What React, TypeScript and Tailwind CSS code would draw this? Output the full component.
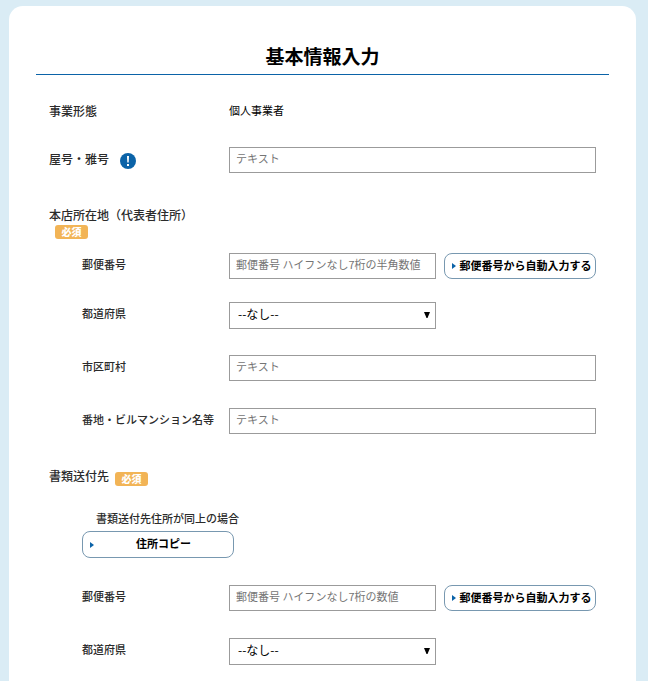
import { ReactElement, ReactNode } from "react";

function Badge() {
    return (
        <span className="inline-block w-[33px] h-[14px] rounded-[3px] bg-[#f2b456] text-center text-[10px] leading-[14px] font-black text-white">
            必須
        </span>
    );
}

function Row({ label, htmlFor, children, className = "" }: {
    label: string;
    htmlFor: string;
    children: ReactNode;
    className?: string;
}): ReactElement {
    return (
        <div className={`flex h-[27px] items-start ${className}`}>
            <label htmlFor={htmlFor} className="w-[180px] shrink-0 pl-[33px] text-[11px] leading-[22px] font-medium whitespace-nowrap">
                {label}
            </label>
            <div className="flex-1 min-w-0">{children}</div>
        </div>
    );
}

function TextBox({ id, placeholder }: { id: string; placeholder: string }) {
    return (
        <input
            id={id}
            type="text"
            placeholder={placeholder}
            className="block w-full min-w-0 h-[26px] border border-[#9b9b9b] bg-white px-[6px] pb-1 text-[11px] text-black placeholder:text-[#757575]"
        />
    );
}

function ActionButton({ children, className = "" }: { children: ReactNode; className?: string }) {
    return (
        <button
            type="button"
            className={`flex w-[152px] items-center rounded-lg border border-[#7898b0] bg-white pl-[7px] text-[11px] font-bold text-black ${className}`}
        >
            <svg width="4" height="6" viewBox="0 0 4 6" className="shrink-0" aria-hidden="true">
                <path d="M0 0L4 3L0 6Z" fill="#0b63a8" />
            </svg>
            <span className="flex-1 pb-[2px] text-center whitespace-nowrap">{children}</span>
        </button>
    );
}

function PostalRow({ id, placeholder, className }: { id: string; placeholder: string; className?: string }) {
    return (
        <Row label="郵便番号" htmlFor={id} className={className}>
            <div className="grid grid-cols-[1fr_152px] gap-2">
                <TextBox id={id} placeholder={placeholder} />
                <ActionButton>郵便番号から自動入力する</ActionButton>
            </div>
        </Row>
    );
}

function PrefectureRow({ id }: { id: string }) {
    return (
        <Row label="都道府県" htmlFor={id}>
            <div className="grid grid-cols-[1fr_152px] gap-2">
                <div className="relative">
                    <select
                        id={id}
                        className="block w-full h-[27px] appearance-none border border-[#9b9b9b] bg-white px-2 pb-1 text-[12px] text-black"
                    >
                        <option>--なし--</option>
                    </select>
                    <svg
                        width="6"
                        height="6"
                        viewBox="0 0 6 6"
                        className="pointer-events-none absolute right-[6px] top-[10px]"
                        aria-hidden="true"
                    >
                        <path d="M0 0H6L3.5 6H2.5Z" fill="#000" />
                    </svg>
                </div>
            </div>
        </Row>
    );
}

export default function App() {
    return (
        <div className="flex min-h-screen flex-col bg-[#daecf5] pt-[6px] pl-[9px] pr-3 font-['Noto_Sans_CJK_JP',sans-serif] text-[#2b2b2b]">
            <main className="flex-1 rounded-t-[14px] bg-white px-[27px] pt-9">
                <h1 className="border-b border-[#0b63a8] pb-1 text-center text-[19px] leading-7 font-bold text-black">
                    基本情報入力
                </h1>

                <form className="pt-6 px-[13px]">
                    <div className="flex">
                        <div className="w-[180px] text-[12px] leading-6 font-medium">事業形態</div>
                        <div className="text-[11px] leading-[22px] text-black">個人事業者</div>
                    </div>

                    <div className="mt-6 flex h-[27px]">
                        <div className="flex w-[180px] shrink-0 items-start">
                            <label htmlFor="trade-name" className="text-[12px] leading-6 font-medium">
                                屋号・雅号
                            </label>
                            <button type="button" aria-label="屋号・雅号について" className="mt-[6px] ml-[11px]">
                                <svg width="16" height="16" viewBox="0 0 16 16" className="block" aria-hidden="true">
                                    <circle cx="8" cy="8" r="8" fill="#0b63a8" />
                                    <path d="M7 3H9L8.7 9.5H7.3Z" fill="#fff" />
                                    <rect x="7" y="11" width="2" height="2" fill="#fff" />
                                </svg>
                            </button>
                        </div>
                        <div className="flex-1 min-w-0">
                            <TextBox id="trade-name" placeholder="テキスト" />
                        </div>
                    </div>

                    <section className="mt-[31px]">
                        <h2 className="text-[12px] leading-5 font-medium">本店所在地（代表者住所）</h2>
                        <div className="flex pl-[6px]">
                            <Badge />
                        </div>
                        <PostalRow
                            id="office-postal"
                            placeholder="郵便番号 ハイフンなし7桁の半角数値"
                            className="mt-[14px] mb-[22px]"
                        />
                        <div className="flex flex-col gap-[26px]">
                            <PrefectureRow id="office-prefecture" />
                            <Row label="市区町村" htmlFor="office-city">
                                <TextBox id="office-city" placeholder="テキスト" />
                            </Row>
                            <Row label="番地・ビルマンション名等" htmlFor="office-street">
                                <TextBox id="office-street" placeholder="テキスト" />
                            </Row>
                        </div>
                    </section>

                    <section className="mt-[31px]">
                        <div className="flex items-end gap-[6px]">
                            <h2 className="text-[12px] leading-5 font-medium">書類送付先</h2>
                            <Badge />
                        </div>
                        <div className="mt-[22px] pl-[33px]">
                            <p className="pl-[14px] text-[11px] leading-5 font-medium">書類送付先住所が同上の場合</p>
                            <ActionButton className="mt-[3px] h-[27px]">住所コピー</ActionButton>
                        </div>
                        <div className="mt-[27px] flex flex-col gap-[26px]">
                            <PostalRow id="mail-postal" placeholder="郵便番号 ハイフンなし7桁の数値" />
                            <PrefectureRow id="mail-prefecture" />
                        </div>
                    </section>
                </form>
            </main>
        </div>
    );
}
